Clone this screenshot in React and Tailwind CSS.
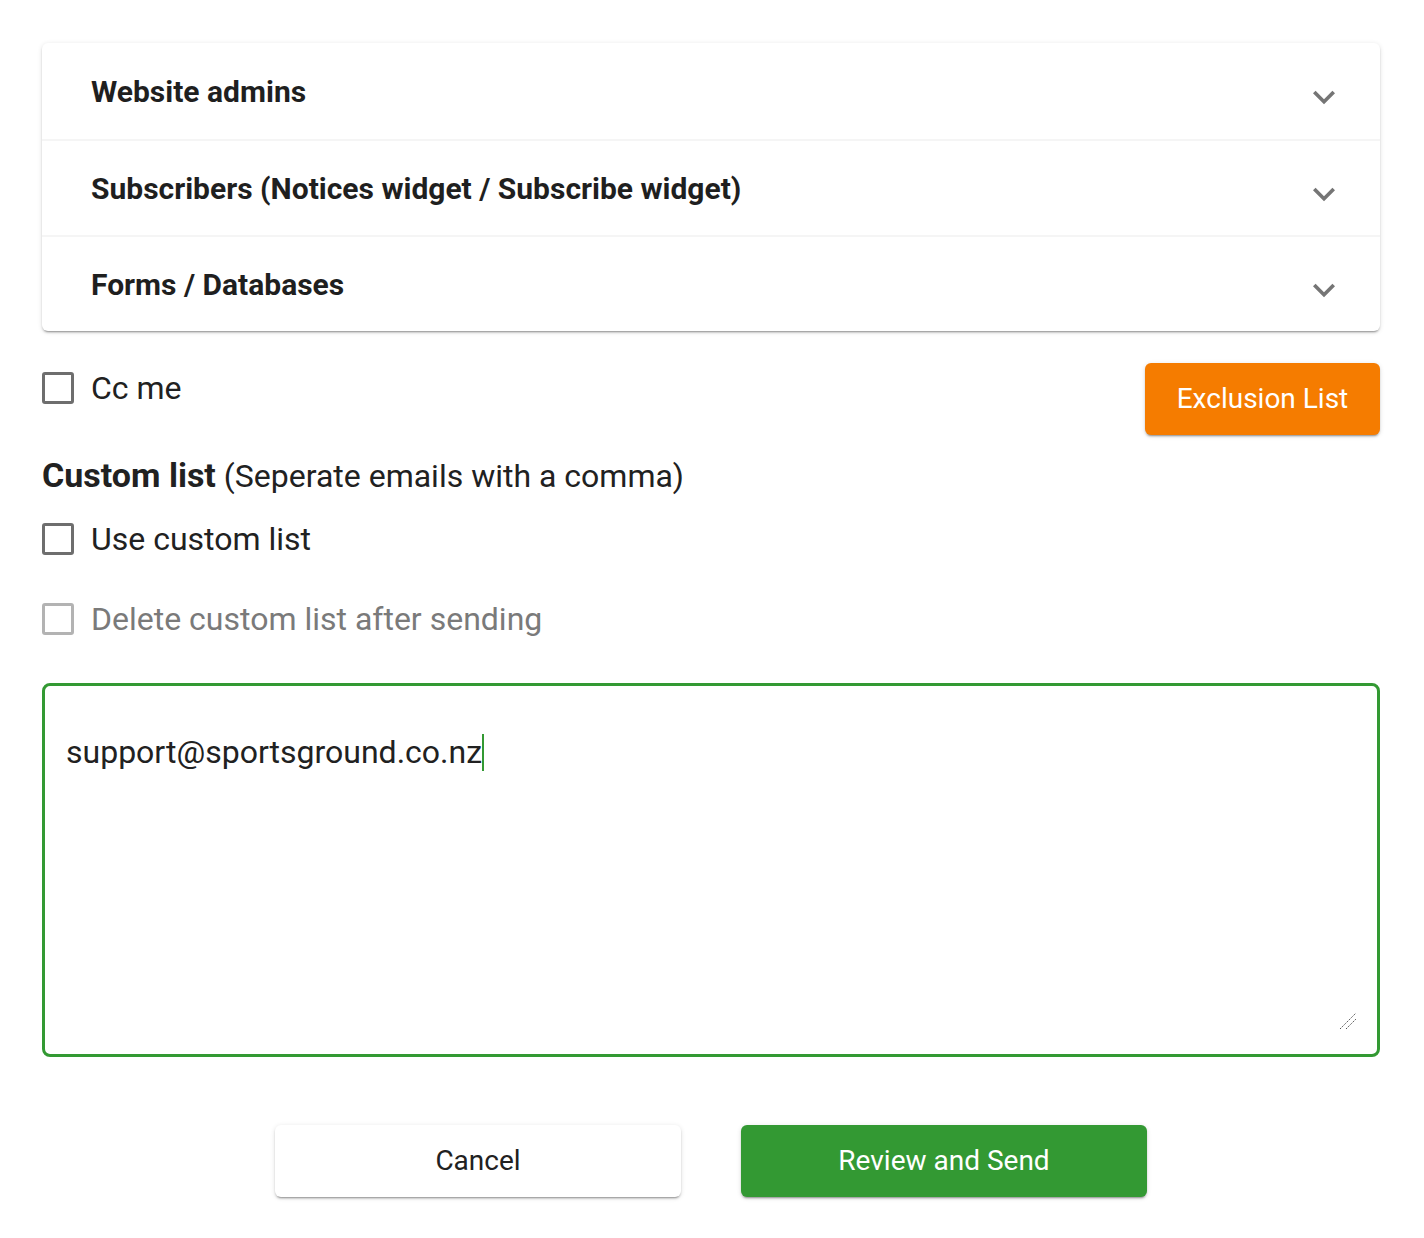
import { useState } from "react";

const SHADOW =
  "shadow-[0px_3px_1px_-2px_rgba(0,0,0,0.2),0px_2px_2px_0px_rgba(0,0,0,0.14),0px_1px_5px_0px_rgba(0,0,0,0.12)]";

const Chevron = () => (
  <svg width="44" height="44" viewBox="0 0 24 24" className="mt-[12px] text-[#757575]">
    <path fill="currentColor" d="M16.59 8.59 12 13.17 7.41 8.59 6 10l6 6 6-6z" />
  </svg>
);

const Box = ({ checked, onClick, disabled }) => (
  <button
    onClick={onClick}
    className={`w-[32px] h-[32px] rounded-[3px] border-[3px] shrink-0 flex items-center justify-center ${
      disabled ? "border-[#b3b3b3]" : "border-[#6e6e6e]"
    } ${checked ? "bg-[#339933] border-[#339933]" : "bg-white"}`}
  >
    {checked && (
      <svg width="22" height="22" viewBox="0 0 24 24">
        <path fill="white" d="M9 16.17 4.83 12l-1.42 1.41L9 19 21 7l-1.41-1.41z" />
      </svg>
    )}
  </button>
);

const Row = ({ label, checked, onClick, disabled }) => (
  <div className="flex items-center h-[50px] gap-[17px]">
    <Box checked={checked} onClick={onClick} disabled={disabled} />
    <span className={`text-[32px] ${disabled ? "text-[#7a7a7a]" : "text-[#212121]"}`}>{label}</span>
  </div>
);

const GROUPS = ["Website admins", "Subscribers (Notices widget / Subscribe widget)", "Forms / Databases"];

export default function App() {
  const [cc, setCc] = useState(false);
  const [useCustom, setUseCustom] = useState(false);

  return (
    <div className="bg-white min-h-[1238px] pl-[42px] pr-[44px] pt-[43px] text-[#212121]" style={{ fontFamily: "Roboto, sans-serif" }}>
      {/* Groups */}
      <div className={`bg-white rounded-[6px] ${SHADOW}`}>
        {GROUPS.map((g, i) => (
          <div
            key={g}
            className={`h-[96px] flex items-center justify-between pl-[49px] pr-[34px] ${i > 0 ? "border-t-2 border-[#f5f5f5]" : ""}`}
          >
            <span className="text-[30px] font-bold text-[#1f1f1f]">{g}</span>
            <Chevron />
          </div>
        ))}
      </div>

      {/* Cc + exclusion */}
      <div className="flex justify-between items-start mt-[32px]">
        <Row label="Cc me" checked={cc} onClick={() => setCc(!cc)} />
        <button className={`w-[235px] h-[72px] rounded-[6px] bg-[#f57c00] text-white text-[28px] ${SHADOW}`}>
          Exclusion List
        </button>
      </div>

      {/* Custom list */}
      <div className="mt-[22px] text-[32px] leading-[36px]">
        <span className="font-bold text-[34px]">Custom list</span> (Seperate emails with a comma)
      </div>
      <div className="mt-[20px]">
        <Row label="Use custom list" checked={useCustom} onClick={() => setUseCustom(!useCustom)} />
      </div>
      <div className="mt-[30px]">
        <Row label="Delete custom list after sending" disabled />
      </div>

      <div className="relative mt-[39px] h-[374px] rounded-[8px] border-[3px] border-[#339933] pl-[21px] pt-[48px]">
        <div className="flex items-center text-[32px] leading-[37px] text-[#212121]">
          support@sportsground.co.nz
          <span className="inline-block w-[2px] h-[37px] bg-[#339933]" />
        </div>
        <svg width="18" height="18" viewBox="0 0 18 18" className="absolute right-[20px] bottom-[24px]">
          <path d="M1 17 17 1 M7 17 17 7" stroke="#555" strokeWidth="1" strokeDasharray="1.5 1" />
        </svg>
      </div>

      {/* Actions */}
      <div className="flex justify-center gap-[60px] mt-[68px]">
        <button className={`w-[406px] h-[72px] rounded-[6px] bg-white text-[#212121] text-[28px] ${SHADOW}`}>
          Cancel
        </button>
        <button className={`w-[406px] h-[72px] rounded-[6px] bg-[#339933] text-white text-[28px] ${SHADOW}`}>
          Review and Send
        </button>
      </div>
    </div>
  );
}
